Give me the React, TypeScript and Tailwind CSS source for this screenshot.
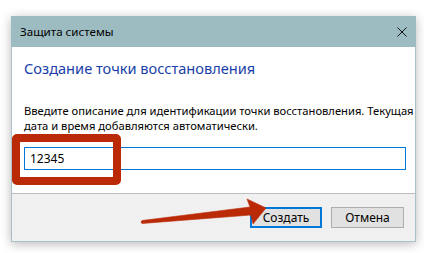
export default function App() {
  return (
    <div
      className="relative h-[253px] w-[424px] overflow-hidden bg-white"
      style={{ fontFamily: '"Noto Sans", "Open Sans", sans-serif' }}
    >
      <div className="pl-[11px] pt-[16px]">
        {/* Dialog window */}
        <div className="flex h-[226px] w-[405px] flex-col border border-t-0 border-[#a9c2c6] shadow-[0_2px_10px_rgba(0,0,0,0.28)]">
          {/* Title bar */}
          <div className="-mx-px flex h-[31px] items-center justify-between bg-[#9cbcc1] pl-[9px] pr-[9px]">
            <span className="text-[11.6px] text-black">Защита системы</span>
            <svg width="10" height="10" viewBox="0 0 10 10" className="shrink-0">
              <path d="M0.5 0.5 L9.5 9.5 M9.5 0.5 L0.5 9.5" stroke="#111" strokeWidth="1" />
            </svg>
          </div>

          {/* Body */}
          <div className="flex h-[146px] flex-col bg-white pl-[12px] pr-[9px] pt-[11px]">
            <h1 className="text-[14.6px] leading-[20px] text-[#1a3fa8]">Создание точки восстановления</h1>
            <p className="mt-[25px] whitespace-nowrap text-[11.2px] leading-[15px] text-black">
              Введите описание для идентификации точки восстановления. Текущая
              <br />
              дата и время добавляются автоматически.
            </p>
            <div className="mt-[14px] flex h-[23px] items-center border border-[#0078d7] pl-[5px] text-[12px] text-black">
              12345
            </div>
          </div>

          {/* Footer */}
          <div className="flex flex-1 items-start justify-end gap-[9px] border-t border-[#bdbdbd] bg-[#f0f0f0] pr-[11px] pt-[13px]">
            <button className="flex h-[21px] w-[72px] items-center justify-center border-2 border-[#0078d7] bg-[#e1e1e1] text-[12px] text-black">
              Создать
            </button>
            <button className="flex h-[21px] w-[73px] items-center justify-center border border-[#adadad] bg-[#e1e1e1] text-[12px] text-black">
              Отмена
            </button>
          </div>
        </div>
      </div>

      {/* Red highlight box */}
      <div className="absolute left-[12px] top-[134px] h-[51px] w-[109px] rounded-[5px] border-[8px] border-[#bb2a06]" />

      {/* Red arrow */}
      <svg className="pointer-events-none absolute left-0 top-0" width="424" height="253" viewBox="0 0 424 253">
        <path
          d="M142 220.5 L250 207 L247 199 L266 208 L253 224 L251 215 L142 223.5 Q140 222 142 220.5 Z"
          fill="#bb2a06"
          stroke="#bb2a06"
          strokeWidth="0.6"
          strokeLinejoin="round"
        />
      </svg>
    </div>
  );
}
